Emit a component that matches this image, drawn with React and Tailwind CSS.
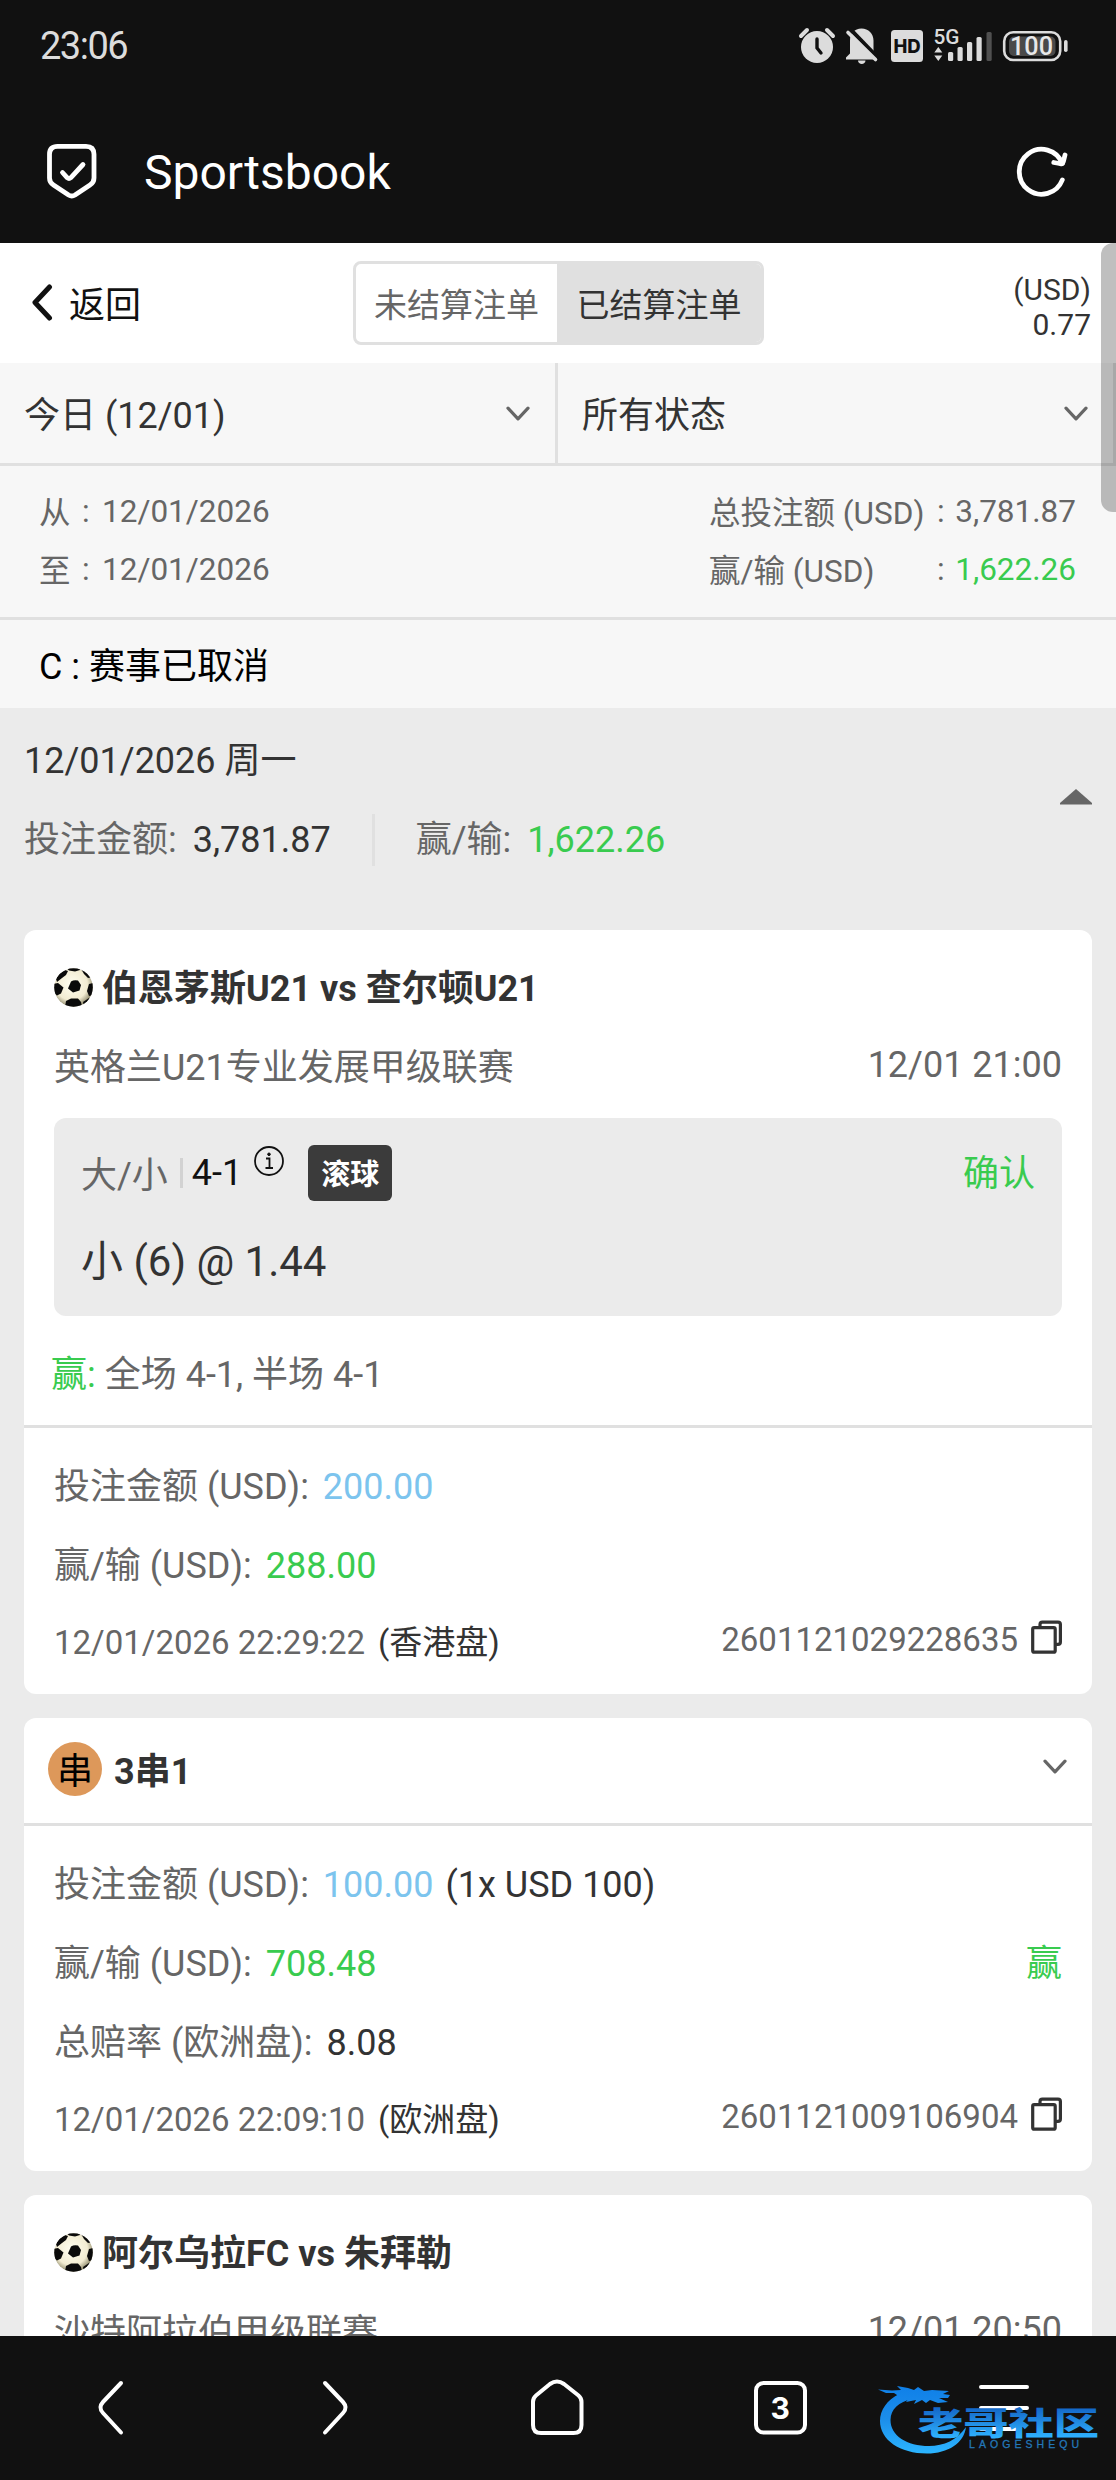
import React from "react";

const FONT = "font-['Roboto','Noto_Sans_CJK_SC',sans-serif]";

function StatusIcons() {
  return (
    <svg width="272" height="48" viewBox="798 23 272 48" fill="#dcdcdc">
      {/* alarm */}
      <circle cx="817" cy="47" r="16" />
      <path d="M801 36l6-6M833 36l-6-6" stroke="#dcdcdc" strokeWidth="4" strokeLinecap="round" />
      <path d="M817 39v9l4 5" stroke="#111" strokeWidth="3.4" fill="none" strokeLinecap="round" />
      {/* muted bell */}
      <path d="M861.5 28.5c7 0 12 5 12 12v14.500l3.500 4.500h-31v-2l4-4V40.500c0-7 4.500-12 11.500-12z" />
      <path d="M858 60.500h7.500c0 4.500-7.500 4.500-7.500 0z" />
      <path d="M850 29l28 29" stroke="#111" strokeWidth="4" />
      <path d="M848 32.500l27.500 27" stroke="#dcdcdc" strokeWidth="3.600" strokeLinecap="round" />
      {/* HD */}
      <rect x="891" y="30" width="32" height="32" rx="3.500" />
      <text x="907" y="53" textAnchor="middle" fontFamily="Inter, sans-serif" fontWeight="800" fontSize="18.500" textLength="27" fill="#111">HD</text>
      {/* signal */}
      <text x="933.500" y="43.500" fontFamily="Roboto, sans-serif" fontSize="20" fontWeight="500" textLength="26" lengthAdjust="spacingAndGlyphs">5G</text>
      <path d="M938.300 47l4 5.500h-8zM938.300 61l4-5.500h-8z" />
      <rect x="948" y="52" width="5.200" height="9" rx="1.500" />
      <rect x="957.500" y="47" width="5.200" height="14" rx="1.500" />
      <rect x="967" y="42" width="5.200" height="19" rx="1.500" />
      <rect x="976.500" y="37" width="5.200" height="24" rx="1.500" />
      <rect x="986.500" y="32" width="5.200" height="29" rx="1.500" fill="#505050" />
      {/* battery */}
      <rect x="1004.200" y="32.200" width="56" height="27.800" rx="9" fill="none" stroke="#dcdcdc" strokeWidth="2.600" />
      <rect x="1009" y="36.500" width="46.500" height="19.500" rx="5" fill="#4a4a4a" />
      <rect x="1064" y="40" width="3.600" height="12" rx="1.800" />
      <text x="1031.500" y="55.300" textAnchor="middle" fontFamily="Roboto, sans-serif" fontSize="26" fontWeight="500" textLength="43" lengthAdjust="spacingAndGlyphs" fill="#e8e8e8">100</text>
    </svg>
  );
}

function TopBar() {
  return (
    <header className="h-[243px] bg-[#111111] text-white">
      <div className="flex h-[94px] items-center justify-between pl-10 pr-[46px]">
        <span className="pb-[2px] text-[38px] leading-none tracking-[-1.5px] text-[#dcdcdc]">23:06</span>
        <StatusIcons />
      </div>
      <div className="-mt-px flex h-[156px] items-center pl-11 pr-[46px]">
        <svg width="56" height="60" viewBox="0 0 56 60" fill="none" stroke="#fff" strokeWidth="4.800" strokeLinecap="round" strokeLinejoin="round">
          <path d="M13.500 5.300H42q8 0 8 8V37q0 4.500-4 7L31 54q-3.200 2-6.400 0L9.500 44q-4-2.500-4-7V13.300q0-8 8-8z" />
          <path d="M18.500 31.500l4.800 5.300q1.700 1.500 3.400 0L39 23.500" />
        </svg>
        <h1 className="ml-11 pt-[3px] text-[48px] font-normal leading-none">Sportsbook</h1>
        <svg className="ml-auto" width="58" height="60" viewBox="1012 141 58 60" fill="none" stroke="#fff" strokeWidth="4.800" strokeLinecap="round" strokeLinejoin="round">
          <path d="M1062.300 163.500A22.300 22.500 0 1 0 1062.300 180" />
          <path d="M1065 155l-1.600 6.500q-.8 3-4 2l-5.600-1" />
        </svg>
      </div>
    </header>
  );
}

function Chevron() {
  return (
    <svg width="24" height="16" viewBox="0 0 24 16" fill="none" stroke="#666" strokeWidth="3.200" strokeLinecap="round" strokeLinejoin="round">
      <path d="M2 2.200L12 12.800 22 2.200" />
    </svg>
  );
}

function Filter({ label }) {
  return (
    <div className="flex h-[100px] flex-1 items-center justify-between border-r-[3px] border-[#e0e0e0] pl-6 pr-[25px] text-[36px] leading-none text-[#333]">
      <span className="pt-[6px]">{label}</span>
      <span className="pt-[2px]"><Chevron /></span>
    </div>
  );
}

function SoccerBall() {
  return (
    <svg className="mb-[3px]" width="39" height="39" viewBox="0 0 39 39">
      <defs>
        <radialGradient id="ball" cx="45%" cy="42%" r="58%">
          <stop offset="0" stopColor="#fffef0" />
          <stop offset=".7" stopColor="#f2ecd2" />
          <stop offset="1" stopColor="#8f8a6c" />
        </radialGradient>
        <clipPath id="ballClip"><circle cx="19.500" cy="19.500" r="19.300" /></clipPath>
      </defs>
      <g clipPath="url(#ballClip)">
        <circle cx="19.500" cy="19.500" r="19.500" fill="url(#ball)" />
        <g fill="#0a0a0a">
          <path d="M17 13.500q3-2 7-1l3 4.500-1.500 5.500-6.500 2-5-4z" />
          <path d="M-1 16l5-1 5.500 4.500-2.500 6-4 2L-1 24z" />
          <path d="M12 33l5-2.500h7l3 3.500 1 5H11z" />
          <path d="M11-1h16l-1 3-5 1.500-6-1z" />
          <path d="M26-1l4 7 4 4 5-1-4-8z" />
          <path d="M2 11l3-5 6-4 3 1-2 4-4 3-5 4z" />
          <path d="M35 16l4-1v12l-4 1-2-5z" />
          <path d="M29 34l6-4 2 3-7 5z" />
        </g>
      </g>
    </svg>
  );
}

function CopyIcon() {
  return (
    <svg width="31" height="34" viewBox="0 0 31 34" fill="none" stroke="#333" strokeWidth="3.200" strokeLinejoin="round">
      <path d="M9 7.500V4.500q0-2.400 2.400-2.400H27q2.400 0 2.400 2.400V22q0 2.400-2.400 2.400h-2.500" />
      <rect x="1.700" y="7.700" width="22.500" height="24.500" rx="1.500" />
    </svg>
  );
}

function Card({ children, className = "" }) {
  return <article className={`mx-6 rounded-[12px] bg-white text-[36px] leading-none text-[#666] ${className}`}>{children}</article>;
}

function MatchHead({ title, league, time }) {
  return (
    <div className="pl-[30px] pr-[30px] pt-5">
      <div className="flex h-[78px] items-center">
        <SoccerBall />
        <h2 className="ml-[9px] font-bold text-[#333]">{title}</h2>
      </div>
      <div className="flex h-20 items-center justify-between">
        <span>{league}</span>
        <span className="pb-[6px]">{time}</span>
      </div>
    </div>
  );
}

function Amount({ label, value, color, children }) {
  return (
    <div className="flex h-[79px] items-center">
      <span>{label}</span>
      <span className={`ml-[14px] ${color}`}>{value}</span>
      {children}
    </div>
  );
}

function TicketFoot({ time, odds, id }) {
  return (
    <div className="flex h-[75px] items-center text-[33px]">
      <span>{time}</span>
      <span className="ml-[13px] text-[#333]">{odds}</span>
      <span className="ml-auto pb-[6px]">{id}</span>
      <span className="ml-[13px] pb-[11px]"><CopyIcon /></span>
    </div>
  );
}

function SummaryRow({ label, value, color = "" }) {
  return (
    <div className="flex h-[58px] items-center">
      <span className="w-[228px] pt-[3px]">{label}</span>
      <span className="w-[17px]">:</span>
      <span className={`w-[122px] text-right ${color}`}>{value}</span>
    </div>
  );
}

function Watermark() {
  return (
    <svg className="absolute left-[874px] top-[44px]" width="230" height="80" viewBox="874 2380 230 80">
      <defs>
        <linearGradient id="wm" x1="0" y1="2385" x2="0" y2="2453" gradientUnits="userSpaceOnUse">
          <stop offset="0" stopColor="#0f7fe8" />
          <stop offset=".5" stopColor="#1c8eea" />
          <stop offset="1" stopColor="#2bb4ff" />
        </linearGradient>
        <linearGradient id="wmText" x1="0" y1="2408" x2="0" y2="2438" gradientUnits="userSpaceOnUse">
          <stop offset="0" stopColor="#1467c8" />
          <stop offset="1" stopColor="#2fb2ff" />
        </linearGradient>
      </defs>
      <g fill="url(#wm)">
        {/* coiled body */}
        <path d="M899 2394C887 2400 880 2410 880 2421C880 2440 900 2453.500 927 2453.500C948 2453.500 964 2443 966 2427C957 2440 944 2446 929 2446C907 2446 890.500 2436 890.500 2420C890.500 2409 899 2402 912 2399L922 2395L910 2391Z" />
        {/* head, mane and whiskers */}
        <path d="M878 2389.500L892 2390.500L901 2390L897 2386L908 2388L914 2390L918 2387L924 2391L932 2390L949 2391L943 2394L950 2395L948 2398L939 2398L948 2402L938 2403L930 2400L926 2403L922 2400L914 2404L916 2400L906 2402L909 2398L900 2397L894 2393L886 2393Z" />
      </g>
      <text x="918" y="2435" fontFamily="'Noto Sans CJK SC', sans-serif" fontWeight="900" fontSize="32" textLength="181" lengthAdjust="spacingAndGlyphs" fill="url(#wmText)">老哥社区</text>
      <text x="969" y="2447.500" fontFamily="'Liberation Sans', sans-serif" fontSize="10.500" textLength="110" fill="#2377b8" stroke="#2377b8" strokeWidth=".3">LAOGESHEQU</text>
    </svg>
  );
}

function BottomNav() {
  return (
    <nav className="relative h-36 bg-[#111111]">
      <svg width="1116" height="144" viewBox="0 2336 1116 144" fill="none" stroke="#fff" strokeWidth="4" strokeLinecap="round" strokeLinejoin="round">
        <path d="M121 2383L103 2402q-5 5.500 0 11L121 2432.500" />
        <path d="M325 2383l18 19q5 5.500 0 11L325 2432.500" />
        <path d="M533 2402q0-4 3-6.500L550 2384q7-5 14 0l14.500 11.500q3 2.500 3 6.500V2425q0 8-8 8H541q-8 0-8-8z" />
        <rect x="756" y="2383" width="49" height="49.500" rx="7.500" />
        <path d="M981 2387h46M981 2408h46M981 2429h34" />
        <text x="780.300" y="2419" textAnchor="middle" fontFamily="Inter, sans-serif" fontWeight="700" fontSize="30" fill="#fff" stroke="none">3</text>
      </svg>
      <Watermark />
    </nav>
  );
}

export default function App() {
  return (
    <div className={`h-[2480px] w-[1116px] overflow-hidden bg-[#ebebeb] ${FONT}`}>
      <TopBar />
      <main className="relative h-[2093px] overflow-hidden">
        <div className="grid h-[120px] grid-cols-[1fr_411px_1fr] items-center bg-white pl-[28px] pr-[25px]">
          <div className="flex items-center pl-[3px] text-[36px] leading-none text-[#111]">
            <svg width="22" height="38" viewBox="0 0 22 38" fill="none" stroke="#111" strokeWidth="5" strokeLinecap="round" strokeLinejoin="round">
              <path d="M18.500 3L4 18.500 18.500 34" />
            </svg>
            <span className="ml-4 pt-[5px]">返回</span>
          </div>
          <div className="-ml-px flex h-[84px] w-[411px] overflow-hidden rounded-[8px] border-[3px] border-[#e0e0e0] bg-white text-[33px] leading-none">
            <div className="flex w-[201px] items-center justify-center pt-[4px] text-[#666]">未结算注单</div>
            <div className="flex flex-1 items-center justify-center bg-[#e0e0e0] pt-[4px] text-[#333]">已结算注单</div>
          </div>
          <div className="pt-[7px] text-right text-[30px] leading-[35px] text-[#333]">
            <div>(USD)</div>
            <div>0.77</div>
          </div>
        </div>

        <div className="flex border-b-[3px] border-[#e0e0e0] bg-[#f7f7f7]">
          <Filter label="今日 (12/01)" />
          <Filter label="所有状态" />
        </div>

        <div className="flex h-[154px] justify-between border-b-[3px] border-[#e0e0e0] bg-[#f7f7f7] pl-[39px] pr-[40px] pt-[17px] text-[31.5px] leading-none text-[#666]">
          <div>
            <div className="flex h-[58px] items-center"><span className="w-[43px] pt-[3px]">从</span><span className="w-[20px]">:</span>12/01/2026</div>
            <div className="flex h-[58px] items-center"><span className="w-[43px] pt-[3px]">至</span><span className="w-[20px]">:</span>12/01/2026</div>
          </div>
          <div>
            <SummaryRow label="总投注额 (USD)" value="3,781.87" />
            <SummaryRow label="赢/输 (USD)" value="1,622.26" color="text-[#39cb4f]" />
          </div>
        </div>

        <div className="flex h-[88px] items-center bg-[#f7f7f7] pl-[39px] pt-[6px] text-[36px] leading-none text-black">C : 赛事已取消</div>

        <section className="flex h-[222px] justify-between pl-6 pr-6 text-[36px] leading-none text-[#666]">
          <div className="pt-[13px]">
            <div className="flex h-20 items-center text-[#333]">12/01/2026 周一</div>
            <div className="flex h-[78px] items-center">
              <span>投注金额:</span>
              <span className="ml-4 text-[#333]">3,781.87</span>
              <span className="ml-[41px] mr-[41px] h-[52px] w-[3px] bg-[#e0e0e0]" />
              <span>赢/输:</span>
              <span className="ml-4 text-[#39cb4f]">1,622.26</span>
            </div>
          </div>
          <svg className="mt-20" width="32" height="17" viewBox="0 0 32 17" fill="#666"><path d="M16 1L32 15v1.500H0V15z" /></svg>
        </section>

        <Card className="h-[764px]">
          <MatchHead title="伯恩茅斯U21 vs 查尔顿U21" league="英格兰U21专业发展甲级联赛" time="12/01 21:00" />
          <div className="mx-[30px] mt-[10px] h-[198px] rounded-[12px] bg-[#ebebeb] px-[27px] pt-6">
            <div className="flex h-[62px] items-center">
              <span className="pt-[5px]">大/小</span>
              <span className="ml-[12px] h-[30px] w-[3px] bg-[#d2d2d2]" />
              <span className="ml-[9px] text-[#111]">4-1</span>
              <svg className="mb-[24px] ml-[12px]" width="30" height="30" viewBox="0 0 30 30" fill="none" stroke="#111" strokeWidth="1.800">
                <circle cx="15" cy="15" r="14" />
                <path d="M12 12.500h3.500V22M11.500 22h7.500" />
                <circle cx="15" cy="8.300" r="1.300" fill="#111" strokeWidth="1" />
              </svg>
              <span className="ml-6 flex h-[56px] w-[84px] items-center justify-center rounded-[6px] bg-[#3b3b3b] pt-1 text-[29px] font-bold text-white">滚球</span>
              <span className="ml-auto pt-[2px] text-[#39cb4f]">确认</span>
            </div>
            <div className="mt-[18px] flex h-20 items-center text-[42px] text-[#333]">小 (6) @ 1.44</div>
          </div>
          <div className="flex h-[112px] items-center border-b-[3px] border-[#e0e0e0] pl-[27px] pt-[9px]">
            <span className="text-[#39cb4f]">赢:</span>
            <span className="ml-[9px]">全场 4-1, 半场 4-1</span>
          </div>
          <div className="pl-[30px] pr-[30px] pt-[19px]">
            <Amount label="投注金额 (USD):" value="200.00" color="text-[#7cc4ee]" />
            <Amount label="赢/输 (USD):" value="288.00" color="text-[#39cb4f]" />
            <TicketFoot time="12/01/2026 22:29:22" odds="(香港盘)" id="2601121029228635" />
          </div>
        </Card>

        <Card className="mt-6 h-[453px]">
          <div className="flex h-[108px] items-center border-b-[3px] border-[#e0e0e0] pl-6 pr-[25px]">
            <span className="mb-[3px] flex h-[54px] w-[54px] items-center justify-center rounded-full bg-[#dd985a] pt-[6px] text-[36px] text-black">串</span>
            <h2 className="ml-3 pt-[3px] font-bold text-[#333]">3串1</h2>
            <span className="mb-2 ml-auto"><Chevron /></span>
          </div>
          <div className="pl-[30px] pr-[30px] pt-[19px]">
            <Amount label="投注金额 (USD):" value="100.00" color="text-[#7cc4ee]">
              <span className="ml-[12px] text-[#333]">(1x USD 100)</span>
            </Amount>
            <Amount label="赢/输 (USD):" value="708.48" color="text-[#39cb4f]">
              <span className="ml-auto text-[#39cb4f]">赢</span>
            </Amount>
            <Amount label="总赔率 (欧洲盘):" value="8.08" color="text-[#333]" />
            <TicketFoot time="12/01/2026 22:09:10" odds="(欧洲盘)" id="2601121009106904" />
          </div>
        </Card>

        <Card className="mt-6 h-[400px]">
          <MatchHead title="阿尔乌拉FC vs 朱拜勒" league="沙特阿拉伯甲级联赛" time="12/01 20:50" />
        </Card>

        <div className="absolute right-0 top-0 h-[269px] w-[15px] rounded-l-[12px] bg-black/25" />
      </main>
      <BottomNav />
    </div>
  );
}
